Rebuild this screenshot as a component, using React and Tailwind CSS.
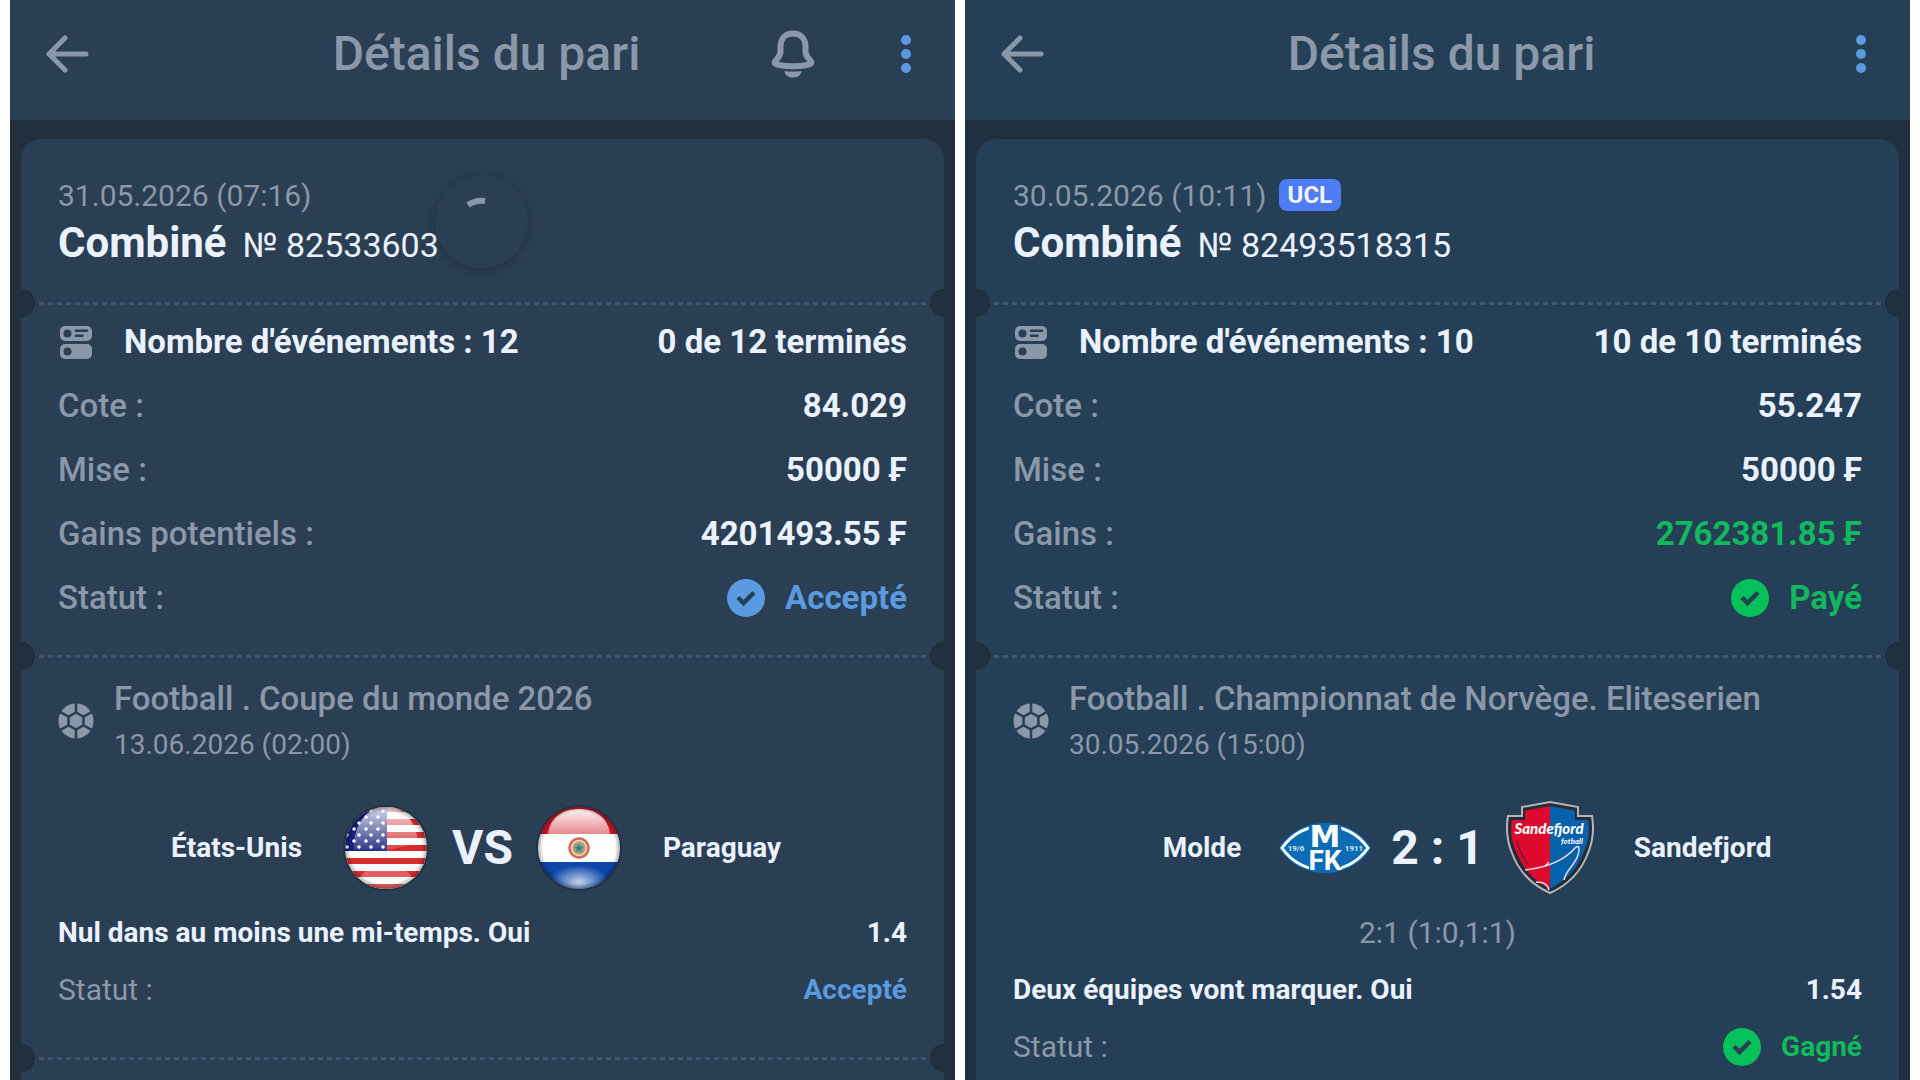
import React from 'react';

const FONT = 'font-[Roboto,"Noto_Sans",sans-serif]';

const bets = [
    {
        id: '82533603',
        date: '31.05.2026 (07:16)',
        panel: 'bg-[#222f3f]',
        surface: 'bg-[#2a3e54]',
        hasBell: true,
        loading: true,
        events: 12,
        done: '0 de 12 terminés',
        rows: [
            { label: 'Cote :', value: '84.029' },
            { label: 'Mise :', value: '50000 ₣' },
            { label: 'Gains potentiels :', value: '4201493.55 ₣' },
        ],
        status: { text: 'Accepté', color: 'text-[#5a9be0]', icon: 'text-[#5a9be0]' },
        match: {
            league: 'Football . Coupe du monde 2026',
            date: '13.06.2026 (02:00)',
            home: 'États-Unis',
            away: 'Paraguay',
            homeLogo: 'usa',
            awayLogo: 'paraguay',
            score: 'VS',
            market: 'Nul dans au moins une mi-temps. Oui',
            odds: '1.4',
            status: { text: 'Accepté', color: 'text-[#5a9be0]' },
        },
        hasMore: true,
    },
    {
        id: '82493518315',
        date: '30.05.2026 (10:11)',
        tag: 'UCL',
        panel: 'bg-[#1f3040]',
        surface: 'bg-[#253f56]',
        events: 10,
        done: '10 de 10 terminés',
        rows: [
            { label: 'Cote :', value: '55.247' },
            { label: 'Mise :', value: '50000 ₣' },
            { label: 'Gains :', value: '2762381.85 ₣', color: 'text-[#12b85e]' },
        ],
        status: { text: 'Payé', color: 'text-[#12b85e]', icon: 'text-[#06c15a]' },
        match: {
            league: 'Football . Championnat de Norvège. Eliteserien',
            date: '30.05.2026 (15:00)',
            home: 'Molde',
            away: 'Sandefjord',
            homeLogo: 'molde',
            awayLogo: 'sandefjord',
            score: '2 : 1',
            detail: '2:1 (1:0,1:1)',
            market: 'Deux équipes vont marquer. Oui',
            odds: '1.54',
            status: { text: 'Gagné', color: 'text-[#12b85e]', icon: 'text-[#06c15a]' },
        },
    },
];

const BackIcon = () => (
    <svg width="44" height="40" viewBox="0 0 44 40" fill="none" stroke="currentColor" strokeWidth="5" strokeLinecap="round" strokeLinejoin="round">
        <path d="M40 20H3M19 4L3 20l16 16" />
    </svg>
);

const BellIcon = () => (
    <svg width="46" height="48" viewBox="0 0 46 48" fill="none" stroke="currentColor">
        <path d="M23 3.500c-7.500 0-12.500 5-12.500 13v5c0 3.500-1.500 5.500-4 8-3 3-2 4.500 1.500 5.200 8.500 1.800 21.500 1.800 30 0 3.500-.7 4.500-2.200 1.500-5.200-2.500-2.500-4-4.500-4-8v-5c0-8-5-13-12.500-13z" strokeWidth="6" strokeLinejoin="round" />
        <path d="M14.500 41c5 .7 12 .7 17 0-.3 4-3.500 6.500-8.500 6.500s-8.200-2.500-8.500-6.500z" fill="currentColor" stroke="none" />
    </svg>
);

const MenuIcon = () => (
    <svg width="12" height="40" viewBox="0 0 12 40" fill="currentColor">
        <circle cx="6" cy="6" r="5" />
        <circle cx="6" cy="20" r="5" />
        <circle cx="6" cy="34" r="5" />
    </svg>
);

const EventsIcon = () => (
    <svg width="32" height="33" viewBox="0 0 32 33" fill="currentColor" fillRule="evenodd">
        <path d="M5 0h22a5 5 0 0 1 5 5v5a5 5 0 0 1-5 5H5a5 5 0 0 1-5-5V5a5 5 0 0 1 5-5zm2.500 3.500a4 4 0 1 0 0 8 4 4 0 0 0 0-8zM16 3.500a1.200 1.200 0 0 0 0 2.500h11a1.200 1.200 0 0 0 0-2.500zM16 8.500a1.200 1.200 0 0 0 0 2.500h6.500a1.200 1.200 0 0 0 0-2.500z" />
        <path d="M5 18h22a5 5 0 0 1 5 5v5a5 5 0 0 1-5 5H5a5 5 0 0 1-5-5v-5a5 5 0 0 1 5-5zm2.500 3.500a4 4 0 1 0 0 8 4 4 0 0 0 0-8z" />
    </svg>
);

const BallIcon = ({ id }) => (
    <svg width="36" height="36" viewBox="0 0 36 36" fill="currentColor">
        <mask id={id}>
            <circle cx="18" cy="18" r="17.500" fill="#fff" />
            <path d="M18 9.500l7.400 4.250v8.500L18 26.500l-7.400-4.250v-8.500z" fill="none" stroke="#000" strokeWidth="2.500" />
            <path d="M18 0v9.500M18 26.500V36M25.400 13.750L34 8.800M25.400 22.250l8.600 4.950M10.600 13.750L2 8.800M10.600 22.250L2 27.200" stroke="#000" strokeWidth="2.500" />
        </mask>
        <rect width="36" height="36" mask={`url(#${id})`} />
    </svg>
);

const CheckIcon = ({ color }) => (
    <svg width="38" height="38" viewBox="0 0 38 38" className={color}>
        <circle cx="19" cy="19" r="19" fill="currentColor" />
        <path d="M11 18.500l5.500 5.500 10.500-10.500" fill="none" stroke="#253f56" strokeWidth="4.500" />
    </svg>
);

const STAR_ROWS = [0, 1, 2, 3, 4, 5, 6];
const STAR_COLS = [0, 1, 2, 3];

const UsaFlag = () => (
    <svg width="88" height="88" viewBox="0 0 88 88">
        <defs>
            <clipPath id="usa-clip"><circle cx="44" cy="44" r="41" /></clipPath>
            <linearGradient id="usa-gloss" x1="0" y1="0" x2="0" y2="1">
                <stop offset="0" stopColor="#fff" stopOpacity=".85" />
                <stop offset="1" stopColor="#fff" stopOpacity=".1" />
            </linearGradient>
            <radialGradient id="usa-shade">
                <stop offset=".88" stopColor="#000" stopOpacity="0" />
                <stop offset="1" stopColor="#000" stopOpacity=".3" />
            </radialGradient>
        </defs>
        <circle cx="44" cy="44" r="43" fill="#16202c" opacity=".4" />
        <g clipPath="url(#usa-clip)">
            <rect width="88" height="88" fill="#fff" />
            {[2, 15, 28, 41, 54, 67, 80].map(y => (
                <rect key={y} y={y} width="88" height="6" fill="#d52b2b" />
            ))}
            <rect width="45" height="47" fill="#14207a" />
            {STAR_ROWS.map(row => STAR_COLS.map(col => (
                <circle key={`${row}-${col}`} cx={(row % 2 ? 0 : 5) + col * 12} cy={7 + row * 6} r="1.800" fill="#fff" />
            )))}
            <path d="M12 46a32 40 0 0 1 64-8c-8 5-20 4-31 9z" fill="url(#usa-gloss)" />
            <ellipse cx="44" cy="76" rx="26" ry="14" fill="#fff" opacity=".25" />
            <circle cx="44" cy="44" r="41" fill="url(#usa-shade)" />
        </g>
    </svg>
);

const ParaguayFlag = () => (
    <svg width="88" height="88" viewBox="0 0 88 88">
        <defs>
            <clipPath id="py-clip"><circle cx="44" cy="44" r="41" /></clipPath>
            <linearGradient id="py-gloss" x1="0" y1="0" x2="0" y2="1">
                <stop offset="0" stopColor="#fff" stopOpacity=".95" />
                <stop offset="1" stopColor="#fff" stopOpacity=".5" />
            </linearGradient>
            <radialGradient id="py-glow">
                <stop offset="0" stopColor="#fff" stopOpacity=".75" />
                <stop offset="1" stopColor="#fff" stopOpacity="0" />
            </radialGradient>
            <radialGradient id="py-shade">
                <stop offset=".88" stopColor="#000" stopOpacity="0" />
                <stop offset="1" stopColor="#000" stopOpacity=".3" />
            </radialGradient>
        </defs>
        <circle cx="44" cy="44" r="43" fill="#16202c" opacity=".4" />
        <g clipPath="url(#py-clip)">
            <rect width="88" height="30" fill="#cf1420" />
            <rect y="30" width="88" height="28" fill="#fff" />
            <rect y="58" width="88" height="30" fill="#0d47a8" />
            <path d="M13 30C15 13 28 5 44 5s29 8 31 25z" fill="url(#py-gloss)" />
            <ellipse cx="44" cy="78" rx="30" ry="17" fill="url(#py-glow)" />
            <circle cx="44" cy="44" r="41" fill="url(#py-shade)" />
        </g>
        <circle cx="44" cy="44" r="9.500" fill="#f0d9c4" stroke="#cf6a5c" strokeWidth="2.500" />
        <circle cx="44" cy="44" r="6" fill="#7fa3a0" stroke="#d9a04a" strokeWidth="1.500" />
        <path d="M44 40l1.200 2.800 3 .2-2.300 2 .8 3-2.700-1.700-2.700 1.700.8-3-2.300-2 3-.2z" fill="#3f7a86" />
    </svg>
);

const MoldeLogo = () => (
    <svg width="92" height="52" viewBox="0 0 92 52" className="overflow-visible">
        <defs>
            <clipPath id="molde-clip"><path d="M0 26C10 10 27 1 46 1s36 9 46 25C82 42 65 51 46 51S10 42 0 26z" /></clipPath>
        </defs>
        <g clipPath="url(#molde-clip)">
            <rect width="92" height="52" fill="#0b6cb5" />
            <path d="M3 26C13 12 28 4 46 4s33 8 43 22C79 40 64 48 46 48S13 40 3 26z" fill="none" stroke="#fff" strokeWidth="3" />
            <path d="M31 0h30l5 25H26zM30 25h32v27H30z" fill="#0b6cb5" />
        </g>
        <text x="46" y="25" textAnchor="middle" fontSize="31" fontWeight="700" fontFamily="'DejaVu Sans', sans-serif" fill="#fff">M</text>
        <text x="46" y="48" textAnchor="middle" fontSize="28" fontWeight="700" fontFamily="Roboto, sans-serif" fill="#fff">FK</text>
        <text x="17" y="29" textAnchor="middle" fontSize="8" fontWeight="700" fontFamily="Roboto, sans-serif" fill="#d7eaf8">19/6</text>
        <text x="75" y="29" textAnchor="middle" fontSize="8" fontWeight="700" fontFamily="Roboto, sans-serif" fill="#d7eaf8">1911</text>
    </svg>
);

const SandefjordLogo = () => (
    <svg width="88" height="94" viewBox="0 0 88 94">
        <defs>
            <clipPath id="sf-clip"><path d="M44 2l28 5v9h13c2 12 1 24-4 36C74 70 62 83 44 91 26 83 14 70 7 52 2 40 1 28 3 16h13V7z" /></clipPath>
        </defs>
        <g clipPath="url(#sf-clip)">
            <rect width="44" height="94" fill="#dd0a2d" />
            <rect x="44" width="44" height="94" fill="#0561a9" />
        </g>
        <path d="M44 3l27 5v9h13c2 12 1 23-4 34C73 69 61 82 44 90 27 82 15 69 8 51 3 40 2 29 4 17h13V8z" fill="none" stroke="#222c3b" strokeWidth="4" />
        <path d="M44 1l28 5v9h14c2 12 1 25-4 37C75 71 62 84 44 92 26 84 13 71 6 52 1 40 0 27 2 15h14V6z" fill="none" stroke="#b9b4b3" strokeWidth="2" />
        <path d="M19 69c18-2 37-7 50-22 4-4 5 0 3 7-4 12-12 14-14 25M30 81c8 0 11 2 13 8M39 65l4-4" fill="none" stroke="#f1d5e2" strokeWidth="1.500" />
        <path d="M11 40c2 10 6 17 12 25" fill="none" stroke="#7d1636" strokeWidth="1.500" />
        <text x="43" y="33" textAnchor="middle" fontSize="15" fontWeight="900" fontStyle="italic" fontFamily="Lato, sans-serif" fill="#fff">Sandefjord</text>
        <text x="66" y="43" textAnchor="middle" fontSize="8" fontStyle="italic" fontFamily="Lato, sans-serif" fill="#fff">fotball</text>
    </svg>
);

const logos = {
    usa: UsaFlag,
    paraguay: ParaguayFlag,
    molde: MoldeLogo,
    sandefjord: SandefjordLogo,
};

const TeamLogo = ({ name }) => {
    const Logo = logos[name];
    return (
        <div className="flex w-24 shrink-0 items-center justify-center">
            <Logo />
        </div>
    );
};

// Perforated line between two parts of the ticket
const Divider = ({ panel }) => (
    <div className="flex h-7 items-center justify-between overflow-hidden">
        <span className={`-ml-[14px] size-7 shrink-0 rounded-full shadow-inner ${panel}`} />
        <span className="h-[3px] flex-1 bg-[repeating-linear-gradient(90deg,transparent_0_4px,#40566e_4px_9px)]" />
        <span className={`-mr-[14px] size-7 shrink-0 rounded-full shadow-inner ${panel}`} />
    </div>
);

const Status = ({ status }) => (
    <span className={`flex items-center gap-5 font-bold ${status.color}`}>
        {status.icon && <CheckIcon color={status.icon} />}
        {status.text}
    </span>
);

const Row = ({ label, children }) => (
    <div className="flex h-16 items-center justify-between text-[33px]">
        <dt className="font-medium text-[#8a98a9]">{label}</dt>
        <dd className="font-bold">{children}</dd>
    </div>
);

const Match = ({ match }) => (
    <section className="px-[37px] pt-[5px]">
        <div className="flex items-center gap-5 text-[#8a98a9]">
            <BallIcon id={`ball-${match.homeLogo}`} />
            <div>
                <h2 className="text-[33px] leading-[48px] font-medium">{match.league}</h2>
                <p className="text-[28px] leading-[44px]">{match.date}</p>
            </div>
        </div>
        <div className="mt-[33px] flex h-24 items-center text-[28px] font-bold">
            <span className="flex-1 pr-9 text-right">{match.home}</span>
            <TeamLogo name={match.homeLogo} />
            <span className="px-[18px] text-[48px]">{match.score}</span>
            <TeamLogo name={match.awayLogo} />
            <span className="flex-1 pl-9">{match.away}</span>
        </div>
        <div className="mt-2 text-[28px]">
            {match.detail && (
                <p className="flex h-[57px] items-center justify-center text-[30px] text-[#8a98a9]">{match.detail}</p>
            )}
            <div className="flex h-[57px] items-center justify-between font-bold">
                <span>{match.market}</span>
                <span>{match.odds}</span>
            </div>
            <div className="flex h-[57px] items-center justify-between">
                <span className="text-[30px] text-[#8a98a9]">Statut :</span>
                <Status status={match.status} />
            </div>
        </div>
    </section>
);

const BetPanel = ({ bet }) => (
    <article className={`flex min-w-0 flex-1 flex-col ${bet.panel}`}>
        <header className={`grid h-[120px] grid-cols-[1fr_auto_1fr] items-center pr-7 pb-3 pl-9 text-[#8a98a9] ${bet.surface}`}>
            <button aria-label="Retour" className="justify-self-start">
                <BackIcon />
            </button>
            <h1 className="text-[48px] font-medium">Détails du pari</h1>
            <div className="flex items-center justify-end gap-[84px] pr-[15px]">
                {bet.hasBell && (
                    <button aria-label="Notifications"><BellIcon /></button>
                )}
                <button aria-label="Menu" className="text-[#5a9be0]"><MenuIcon /></button>
            </div>
        </header>

        <div className={`mx-[11px] mt-[19px] flex-1 rounded-t-[20px] ${bet.surface}`}>
            <div className="relative h-[150px] px-[37px] pt-9">
                <p className="flex h-10 items-center gap-3 text-[30px] text-[#8a98a9]">
                    {bet.date}
                    {bet.tag && (
                        <span className="flex h-8 items-center rounded-lg bg-[#4d7cf5] px-[9px] text-2xl font-bold text-[#f0f5ff]">{bet.tag}</span>
                    )}
                </p>
                <p className="flex items-baseline gap-4 leading-[56px]">
                    <strong className="text-[42px] font-bold">Combiné</strong>
                    <span className="text-[34px]">№ {bet.id}</span>
                </p>
                {bet.loading && (
                    <div role="status" aria-label="Chargement" className={`absolute top-9 left-[414px] size-[93px] rounded-full shadow-[0_2px_8px_rgba(20,30,50,0.35)] ${bet.surface}`}>
                        <svg width="93" height="93" viewBox="0 0 93 93" fill="none">
                            <path d="M33 30a24 24 0 0 1 17-4" stroke="#8a98a9" strokeWidth="6" />
                        </svg>
                    </div>
                )}
            </div>

            <Divider panel={bet.panel} />

            <section className="h-[332px] px-[37px]">
                <div className="-mt-[7px] flex h-16 items-center text-[33px] font-bold">
                    <span className="w-[66px] pl-[2px] text-[#8a98a9]"><EventsIcon /></span>
                    <span className="flex-1">Nombre d'événements : {bet.events}</span>
                    <span>{bet.done}</span>
                </div>
                <dl>
                    {bet.rows.map(row => (
                        <Row key={row.label} label={row.label}>
                            <span className={row.color}>{row.value}</span>
                        </Row>
                    ))}
                    <Row label="Statut :"><Status status={bet.status} /></Row>
                </dl>
            </section>

            <Divider panel={bet.panel} />
            <Match match={bet.match} />
            {bet.hasMore && (
                <div className="pt-[26px]">
                    <Divider panel={bet.panel} />
                </div>
            )}
        </div>
    </article>
);

const App = () => (
    <main className={`flex min-h-screen gap-[10px] bg-white px-[10px] text-[#eaf2ff] ${FONT}`}>
        {bets.map(bet => (
            <BetPanel key={bet.id} bet={bet} />
        ))}
    </main>
);

export default App;
